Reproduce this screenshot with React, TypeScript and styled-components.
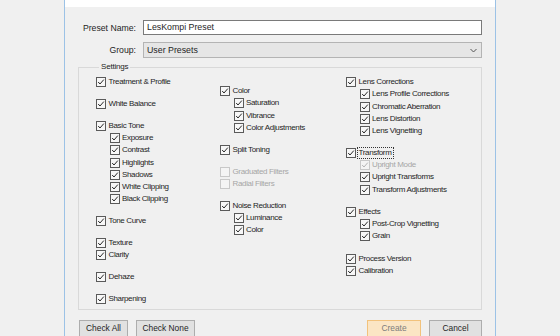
import React from "react";
import styled, { createGlobalStyle } from "styled-components";

const GlobalStyle = createGlobalStyle`
  html, body {
    margin: 0;
    padding: 0;
    background: #f0f0f0;
    font-family: "Liberation Sans", Arial, sans-serif;
    color: #1e1e1e;
  }
`;

const Screen = styled.div`
  width: 560px;
  height: 336px;
  overflow: hidden;
  display: flex;
  background: #f0f0f0;
`;

const Dialog = styled.div`
  margin-left: 64px;
  width: 430px;
  height: 336px;
  overflow: hidden;
  border-left: 1px solid #9cc2e6;
  border-right: 1px solid #9cc2e6;
  display: flex;
  flex-direction: column;
  background: #f0f0f0;
`;

const TitleStrip = styled.div`
  flex: none;
  height: 7px;
  background: #ffffff;
`;

const Body = styled.div`
  flex: none;
  padding: 13px 13px 0 13px;
  display: flex;
  flex-direction: column;
`;

const FieldRow = styled.div<{ $gap?: number }>`
  display: grid;
  grid-template-columns: 65px 1fr;
  align-items: center;
  margin-top: ${(p) => p.$gap ?? 0}px;
`;

const Label = styled.label`
  font-size: 8.7px;
  text-align: right;
  padding-right: 7px;
`;

const TextInput = styled.div`
  height: 13px;
  border: 1px solid #7a7a7a;
  background: #ffffff;
  font-size: 8.8px;
  line-height: 13px;
  padding-left: 3px;
`;

const Select = styled.div`
  height: 14px;
  border: 1px solid #b4b4b4;
  background: #e6e6e6;
  font-size: 8.8px;
  line-height: 14px;
  padding: 0 4px 0 3px;
  display: flex;
  align-items: center;
  justify-content: space-between;
`;

const GroupBox = styled.fieldset`
  margin: 4px 0 0 0;
  padding: 0 0 0 17px;
  border: 1px solid #d9d9d9;
  height: 248px;
  box-sizing: border-box;
  min-width: 0;
`;

const Legend = styled.legend`
  font-size: 8px;
  line-height: 10px;
  padding: 0 2px;
  margin-left: 3px;
  letter-spacing: -0.2px;
`;

const Columns = styled.div`
  display: grid;
  grid-template-columns: 124px 126px 1fr;
  align-items: start;
`;

const Column = styled.div<{ $top?: number }>`
  display: flex;
  flex-direction: column;
  gap: 9.6px;
  padding-top: ${(p) => p.$top ?? 0}px;
`;

const Group = styled.div<{ $extra?: number }>`
  display: flex;
  flex-direction: column;
  margin-top: ${(p) => p.$extra ?? 0}px;
`;

const SubList = styled.div`
  display: flex;
  flex-direction: column;
  padding-left: 13.5px;
`;

const Item = styled.div<{ $disabled?: boolean }>`
  height: 12.25px;
  flex: none;
  display: flex;
  align-items: center;
  font-size: 8px;
  line-height: 10px;
  letter-spacing: -0.35px;
  white-space: nowrap;
  color: ${(p) => (p.$disabled ? "#a6a6a6" : "#1e1e1e")};
`;

const ItemText = styled.span<{ $focus?: boolean }>`
  margin-left: 1.5px;
  padding: 0 1px;
  line-height: 10px;
  outline: ${(p) => (p.$focus ? "1px dotted #333" : "none")};
`;

const ButtonRow = styled.div`
  display: flex;
  margin-top: 10px;
  padding-left: 1px;
`;

const Button = styled.div<{ $w: number; $primary?: boolean; $push?: boolean }>`
  width: ${(p) => p.$w}px;
  height: 18px;
  box-sizing: border-box;
  display: flex;
  align-items: center;
  justify-content: center;
  padding-bottom: 2px;
  font-size: 8.4px;
  border: 1px solid ${(p) => (p.$primary ? "#f2c27c" : "#adadad")};
  background: ${(p) => (p.$primary ? "#fbe5c4" : "#e1e1e1")};
  color: ${(p) => (p.$primary ? "#7d7d7d" : "#1e1e1e")};
  margin-left: ${(p) => (p.$push ? "auto" : "8px")};
  &:first-child {
    margin-left: 0;
  }
`;

function Box({ checked = true, disabled = false }: { checked?: boolean; disabled?: boolean }) {
  const stroke = disabled ? "#c8c8c8" : "#5a5a5a";
  const mark = disabled ? "#b4b4b4" : "#2a2a2a";
  return (
    <svg width="10" height="10" viewBox="0 0 10 10" style={{ flex: "none", display: "block" }}>
      <rect x="0.5" y="0.5" width="9" height="9" fill={disabled ? "#f4f4f4" : "#f7f7f7"} stroke={stroke} />
      {checked && (
        <polyline points="2.2,5 4,7 7.8,2.6" fill="none" stroke={mark} strokeWidth="1" />
      )}
    </svg>
  );
}

type Entry = { label: string; checked?: boolean; disabled?: boolean; focus?: boolean };

function Check({ label, checked = true, disabled = false, focus = false }: Entry) {
  return (
    <Item $disabled={disabled}>
      <Box checked={checked} disabled={disabled} />
      <ItemText $focus={focus}>{label}</ItemText>
    </Item>
  );
}

type GroupDef = { head: Entry[]; subs?: Entry[]; extra?: number };

const col1: GroupDef[] = [
  { head: [{ label: "Treatment & Profile" }] },
  { head: [{ label: "White Balance" }] },
  {
    head: [{ label: "Basic Tone" }],
    subs: [
      { label: "Exposure" },
      { label: "Contrast" },
      { label: "Highlights" },
      { label: "Shadows" },
      { label: "White Clipping" },
      { label: "Black Clipping" },
    ],
  },
  { head: [{ label: "Tone Curve" }] },
  { head: [{ label: "Texture" }, { label: "Clarity" }] },
  { head: [{ label: "Dehaze" }] },
  { head: [{ label: "Sharpening" }] },
];

const col2: GroupDef[] = [
  {
    head: [{ label: "Color" }],
    subs: [{ label: "Saturation" }, { label: "Vibrance" }, { label: "Color Adjustments" }],
  },
  { head: [{ label: "Split Toning" }] },
  {
    head: [
      { label: "Graduated Filters", checked: false, disabled: true },
      { label: "Radial Filters", checked: false, disabled: true },
    ],
  },
  {
    head: [{ label: "Noise Reduction" }],
    subs: [{ label: "Luminance" }, { label: "Color" }],
  },
];

const col3: GroupDef[] = [
  {
    head: [{ label: "Lens Corrections" }],
    subs: [
      { label: "Lens Profile Corrections" },
      { label: "Chromatic Aberration" },
      { label: "Lens Distortion" },
      { label: "Lens Vignetting" },
    ],
  },
  {
    head: [{ label: "Transform", focus: true }],
    subs: [
      { label: "Upright Mode", disabled: true },
      { label: "Upright Transforms" },
      { label: "Transform Adjustments" },
    ],
  },
  {
    head: [{ label: "Effects" }],
    subs: [{ label: "Post-Crop Vignetting" }, { label: "Grain" }],
  },
  { head: [{ label: "Process Version" }, { label: "Calibration" }], extra: 1 },
];

function SettingsColumn({ groups, top }: { groups: GroupDef[]; top: number }) {
  return (
    <Column $top={top}>
      {groups.map((g, i) => (
        <Group key={i} $extra={g.extra}>
          {g.head.map((e) => (
            <Check key={e.label} {...e} />
          ))}
          {g.subs && (
            <SubList>
              {g.subs.map((e) => (
                <Check key={e.label} {...e} />
              ))}
            </SubList>
          )}
        </Group>
      ))}
    </Column>
  );
}

export default function App() {
  return (
    <>
      <GlobalStyle />
      <Screen>
        <Dialog>
          <TitleStrip />
          <Body>
            <FieldRow>
              <Label>Preset Name:</Label>
              <TextInput>LesKompi Preset</TextInput>
            </FieldRow>
            <FieldRow $gap={7}>
              <Label>Group:</Label>
              <Select>
                <span>User Presets</span>
                <svg width="7" height="5" viewBox="0 0 7 5">
                  <polyline points="0.5,1 3.5,4 6.5,1" fill="none" stroke="#555" strokeWidth="1" />
                </svg>
              </Select>
            </FieldRow>
            <GroupBox>
              <Legend>Settings</Legend>
              <Columns>
                <SettingsColumn groups={col1} top={4} />
                <SettingsColumn groups={col2} top={13} />
                <SettingsColumn groups={col3} top={4} />
              </Columns>
            </GroupBox>
            <ButtonRow>
              <Button $w={49}>Check All</Button>
              <Button $w={59}>Check None</Button>
              <Button $w={54} $primary $push>
                Create
              </Button>
              <Button $w={53}>Cancel</Button>
            </ButtonRow>
          </Body>
        </Dialog>
      </Screen>
    </>
  );
}
